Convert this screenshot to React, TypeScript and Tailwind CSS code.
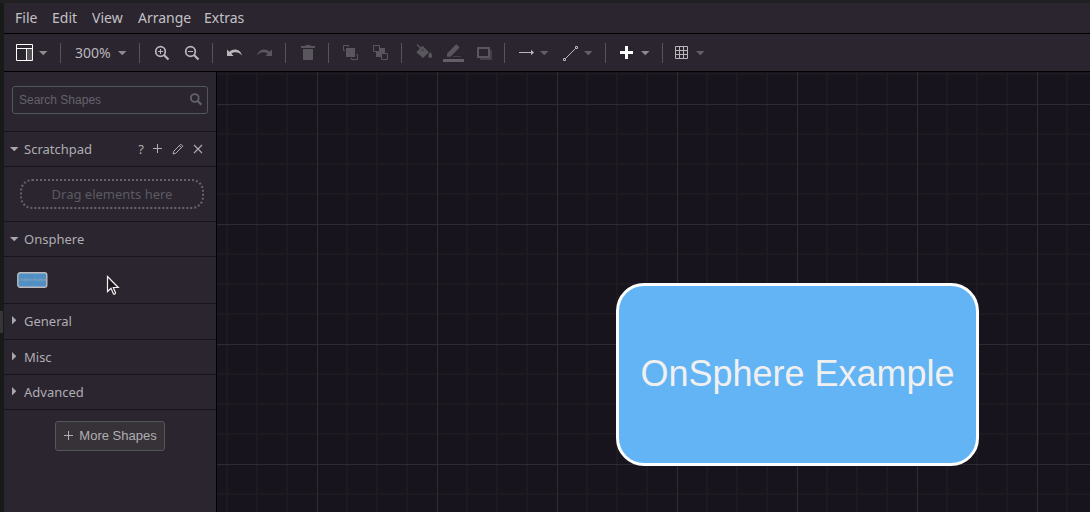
import type { ReactNode } from "react";

type IconProps = {
    children: ReactNode;
    className?: string;
    width?: number;
    height?: number;
};

const Icon = ({ children, className = "", width = 16, height = 16 }: IconProps) => (
    <svg
        aria-hidden="true"
        className={"shrink-0 " + className}
        width={width}
        height={height}
        viewBox={`0 0 ${width} ${height}`}
        fill="none"
        stroke="none"
    >
        {children}
    </svg>
);

const Caret = ({ className = "text-[#626066]" }: { className?: string }) => (
    <Icon width={9} height={6} className={className}>
        <path d="M0 1H8.5L4.25 5.3Z" fill="currentColor" />
    </Icon>
);

const LayoutIcon = () => (
    <Icon width={18} height={18}>
        <path d="M11 5H16V16H11Z" fill="#555356" />
        <path d="M0.5 0.5H16.5V16.5H0.5ZM0.5 4.5H16.5M10.5 4.5V16.5" stroke="#fff" />
    </Icon>
);

const ZoomIcon = ({ plus }: { plus?: boolean }) => (
    <Icon className="text-[#b9b7bb]">
        <circle cx="6.5" cy="6.5" r="4.8" stroke="currentColor" strokeWidth="1.7" />
        <path d="M10 10L14.5 14.5" stroke="currentColor" strokeWidth="2.2" />
        <path d={plus ? "M4 6.5H9M6.5 4V9" : "M4 6.5H9"} stroke="currentColor" />
    </Icon>
);

const UndoIcon = () => (
    <Icon className="text-[#b9b7bb]">
        <path d="M0 4.5V11H6.5L4.3 8.6C7.4 6.4 11.8 6.8 15 10.4C13.5 4.2 6.8 2.6 2.4 6.8Z" fill="currentColor" />
    </Icon>
);

const RedoIcon = () => (
    <Icon className="text-[#59565d]">
        <path d="M15 4.5V11H8.5L10.7 8.6C7.6 6.4 3.2 6.8 0 10.4C1.5 4.2 8.2 2.6 12.6 6.8Z" fill="currentColor" />
    </Icon>
);

const TrashIcon = () => (
    <Icon className="text-[#59565d]">
        <path d="M1 1H5L6 0H10L11 1H15V3H1ZM3 4H13V14C13 15 12.5 15 11.5 15H4.5C3.5 15 3 15 3 14Z" fill="currentColor" />
    </Icon>
);

const ToFrontIcon = () => (
    <Icon className="text-[#59565d]">
        <path d="M3 3H12V12H3Z" fill="currentColor" />
        <path d="M2 5.5H0.5V0.5H5.5V2M13 9.5H14.5V14.5H8.5V13" stroke="currentColor" />
    </Icon>
);

const ToBackIcon = () => (
    <Icon className="text-[#59565d]">
        <path d="M7 3H12V8H8V12H3V7H7Z" fill="currentColor" />
        <path d="M0.5 0.5H6.5V6.5H0.5ZM8.5 8.5H14.5V14.5H8.5Z" stroke="currentColor" />
    </Icon>
);

const FillIcon = () => (
    <Icon width={18} height={18} className="text-[#59565d]">
        <path d="M2 0.5L7.5 6" stroke="currentColor" strokeWidth="1.3" />
        <path d="M7.5 1.8L14 8.2L8 14L1.3 8.2ZM7.3 4.4L5.6 6.4H9.2Z" fill="currentColor" fillRule="evenodd" />
        <path d="M15.2 8C13.7 10 13.2 11 13.2 12A2 2 0 0 0 17.2 12C17.2 11 16.7 10 15.2 8Z" fill="currentColor" />
    </Icon>
);

const StrokeIcon = () => (
    <Icon width={22} height={18} className="text-[#59565d]">
        <path d="M4 9.5L12.2 1.2L13.5 0.2L16.6 3.3L15.6 4.6L7.5 12.7H4Z" fill="currentColor" />
        <path d="M10 12.5H18" stroke="#434047" />
        <path d="M0 15H21V18H0Z" fill="#626066" />
    </Icon>
);

const ShadowIcon = () => (
    <Icon className="text-[#59565d]">
        <path d="M4 5H16V15H4Z" fill="#434047" />
        <path d="M2 3H13V12H2Z" fill="#2a252f" stroke="currentColor" strokeWidth="2" />
    </Icon>
);

const ConnectionIcon = () => (
    <Icon width={18} className="text-[#b9b7bb]">
        <path d="M2 7.5H15" stroke="currentColor" />
        <path d="M14 4.8L17 7.5L14 10.2Z" fill="currentColor" />
    </Icon>
);

const WaypointsIcon = () => (
    <Icon width={18} className="text-[#b9b7bb]">
        <path d="M4.5 13.5L14.5 3.5" stroke="currentColor" />
        <path d="M2.5 13.5H4.5V15.5H2.5ZM14.5 1.5H16.5V3.5H14.5Z" fill="#2a252f" stroke="currentColor" />
    </Icon>
);

const InsertIcon = () => (
    <Icon width={18} className="text-white">
        <path d="M7 1H10V6H15V9H10V14H7V9H2V6H7Z" fill="currentColor" />
    </Icon>
);

const TableIcon = () => (
    <Icon width={18} className="text-[#b9b7bb]">
        <path d="M0.5 1.5H12.5V13.5H0.5ZM4.5 1.5V13.5M8.5 1.5V13.5M0.5 5.5H12.5M0.5 9.5H12.5" stroke="currentColor" />
    </Icon>
);

const PlusIcon = () => (
    <Icon width={12} height={12}>
        <path d="M5.5 1V10M1 5.5H10" stroke="currentColor" />
    </Icon>
);

const PencilIcon = () => (
    <Icon width={12} height={12}>
        <path d="M1 11L1.8 8.2L8.8 1.2L10.8 3.2L3.8 10.2ZM7.4 2.6L9.4 4.6" stroke="currentColor" />
    </Icon>
);

const CrossIcon = () => (
    <Icon width={12} height={12}>
        <path d="M2 2L10 10M10 2L2 10" stroke="currentColor" strokeWidth="1.1" />
    </Icon>
);

const Separator = () => <div className="ml-[5px] mr-[7px] h-5 w-px bg-[#505759]" />;

const ToolButton = ({ label, children }: { label: string; children: ReactNode }) => (
    <button aria-label={label} className="flex h-7 w-[30px] items-center justify-center">
        {children}
    </button>
);

type ToolMenuProps = {
    label: string;
    caret?: string;
    width?: string;
    children: ReactNode;
};

const ToolMenu = ({ label, caret, width = "w-11", children }: ToolMenuProps) => (
    <button aria-label={label} className={"flex h-7 items-center justify-between pl-[5px] pr-[7px] " + width}>
        {children}
        <Caret className={caret} />
    </button>
);

const menus = [
    { label: "File", width: "w-[37px]" },
    { label: "Edit", width: "w-10" },
    { label: "View", width: "w-[46px]" },
    { label: "Arrange", width: "w-[66px]" },
    { label: "Extras", width: "w-14" },
];

const MenuBar = () => (
    <nav className="flex h-[31px] items-center border-b border-black pl-[11px] text-sm text-[#c3c1c5]">
        {menus.map((menu) => (
            <button key={menu.label} className={"text-left " + menu.width}>
                {menu.label}
            </button>
        ))}
    </nav>
);

const Toolbar = () => (
    <div role="toolbar" className="flex h-[38px] items-center border-b border-black pl-[7px] pt-px">
        <ToolMenu label="Layout" caret="text-[#8d8b90]">
            <LayoutIcon />
        </ToolMenu>
        <Separator />
        <button className="flex h-7 w-[66px] items-center justify-between px-[7px] text-sm text-[#b9b7bb]">
            300%
            <Caret className="text-[#8d8b90]" />
        </button>
        <Separator />
        <ToolButton label="Zoom In"><ZoomIcon plus /></ToolButton>
        <ToolButton label="Zoom Out"><ZoomIcon /></ToolButton>
        <Separator />
        <ToolButton label="Undo"><UndoIcon /></ToolButton>
        <ToolButton label="Redo"><RedoIcon /></ToolButton>
        <Separator />
        <ToolButton label="Delete"><TrashIcon /></ToolButton>
        <Separator />
        <ToolButton label="To Front"><ToFrontIcon /></ToolButton>
        <ToolButton label="To Back"><ToBackIcon /></ToolButton>
        <Separator />
        <ToolButton label="Fill Color"><FillIcon /></ToolButton>
        <ToolButton label="Line Color"><StrokeIcon /></ToolButton>
        <ToolButton label="Shadow"><ShadowIcon /></ToolButton>
        <Separator />
        <ToolMenu label="Connection"><ConnectionIcon /></ToolMenu>
        <ToolMenu label="Waypoints"><WaypointsIcon /></ToolMenu>
        <Separator />
        <ToolMenu label="Insert" caret="text-[#8d8b90]"><InsertIcon /></ToolMenu>
        <Separator />
        <ToolMenu label="Table" width="w-[42px]"><TableIcon /></ToolMenu>
    </div>
);

type SectionTitleProps = {
    title: string;
    open?: boolean;
    height?: string;
    children?: ReactNode;
};

const SectionTitle = ({ title, open = false, height = "h-[35px]", children }: SectionTitleProps) => (
    <div className={"flex items-center border-b border-[#18141d] pl-[6px] pr-3 " + height}>
        <button aria-expanded={open} className="flex flex-1 items-center text-left">
            <span className="flex w-[14px]">
                {open ? (
                    <Caret className="text-[#a9a7ab]" />
                ) : (
                    <Icon width={10} height={10} className="text-[#a9a7ab]">
                        <path d="M2 0V8.5L6.3 4.25Z" fill="currentColor" />
                    </Icon>
                )}
            </span>
            {title}
        </button>
        {children}
    </div>
);

const Sidebar = () => (
    <aside className="w-[213px] shrink-0 border-r border-black text-[13px] leading-5 text-[#b0aeb2]">
        <div className="border-b border-[#18141d] px-2 pb-[17px] pt-[14px]">
            <label className="flex h-7 items-center rounded-[3px] border border-[#505759] pl-[6px] pr-[5px]">
                <input
                    type="text"
                    aria-label="Search Shapes"
                    placeholder="Search Shapes"
                    className="min-w-0 flex-1 bg-transparent font-['Liberation_Sans',sans-serif] text-xs outline-none placeholder:text-[#65626a]"
                />
                <Icon width={12} height={14} className="text-[#65626a]">
                    <circle cx="4.8" cy="5" r="3.9" stroke="currentColor" strokeWidth="1.8" />
                    <path d="M7.5 7.8L11.3 11.6" stroke="currentColor" strokeWidth="2.2" />
                </Icon>
            </label>
        </div>

        <SectionTitle title="Scratchpad" open>
            <div className="flex items-center gap-2">
                <button aria-label="Help">?</button>
                <button aria-label="Add"><PlusIcon /></button>
                <button aria-label="Edit Scratchpad"><PencilIcon /></button>
                <button aria-label="Close"><CrossIcon /></button>
            </div>
        </SectionTitle>
        <div className="border-b border-[#18141d] py-3 pl-4 pr-3">
            <div className="flex h-[30px] items-center justify-center rounded-xl border-2 border-dotted border-[#65626a] text-[#5d5a62]">
                Drag elements here
            </div>
        </div>

        <SectionTitle title="Onsphere" open />
        <div className="flex h-[47px] items-center border-b border-[#18141d] pl-[13px]">
            <button aria-label="OnSphere Example">
                <Icon width={31} height={16}>
                    <rect x="0.8" y="0.8" width="29" height="14.4" rx="2.2" fill="#5190c4" stroke="#bcbabd" strokeWidth="1.4" />
                    <text x="15.5" y="8.5" textAnchor="middle" fontSize="3" fill="#a5a9b0" fontFamily="Liberation Sans, sans-serif">
                        OnSphere Example
                    </text>
                </Icon>
            </button>
        </div>

        <SectionTitle title="General" height="h-9 pb-px" />
        <SectionTitle title="Misc" />
        <SectionTitle title="Advanced" />

        <div className="flex justify-center pt-[11px]">
            <button className="flex h-[30px] w-[110px] items-center justify-center gap-1 rounded-[3px] border border-[#505759] bg-[#363237] font-['Liberation_Sans',sans-serif]">
                <PlusIcon />
                More Shapes
            </button>
        </div>
    </aside>
);

// Ten-unit canvas grid at 300%, with every fourth line emphasised
const Grid = () => (
    <svg aria-hidden="true" className="absolute inset-0 size-full">
        <defs>
            <pattern id="grid" x="100" y="32" width="120" height="120" patternUnits="userSpaceOnUse">
                <path d="M30 0V120M60 0V120M90 0V120M0 30H120M0 60H120M0 90H120" stroke="#1d1a20" strokeWidth="2" />
                <path d="M0.5 0V120M0 0.5H120" stroke="#2e2b31" />
            </pattern>
        </defs>
        <rect width="100%" height="100%" fill="url(#grid)" />
    </svg>
);

const Canvas = () => (
    <main className="relative flex-1 overflow-hidden bg-[#18141d]">
        <Grid />
        <div className="absolute left-[399px] top-[211px] flex h-[183px] w-[363px] items-center justify-center rounded-[28px] border-3 border-white bg-[#62b4f4] pb-0.5 font-['Liberation_Sans',sans-serif] text-4xl text-[#f0f0f0]">
            OnSphere Example
        </div>
    </main>
);

const Pointer = () => (
    <svg aria-hidden="true" className="absolute left-[106px] top-[272px]" width="14" height="21" viewBox="0 0 14 21">
        <path
            d="M1.5 1.5V16.5L5 13.2L7.4 18.8C8 19.6 9.8 18.8 9.5 17.8L7.3 12.5H12.3Z"
            fill="#1c1a1e"
            stroke="#f2f2f2"
            strokeWidth="1.2"
        />
    </svg>
);

const App = () => (
    <div className="relative flex min-h-screen border-t-3 border-[#202020] bg-[#2a252f] font-['Noto_Sans',sans-serif]">
        <div className="flex w-1 shrink-0 flex-col bg-[#181a18] pt-[308px]">
            <div className="h-[22px] w-[3px] bg-[#35353a]" />
        </div>
        <div className="flex min-w-0 flex-1 flex-col">
            <MenuBar />
            <Toolbar />
            <div className="flex flex-1">
                <Sidebar />
                <Canvas />
            </div>
        </div>
        <Pointer />
    </div>
);

export default App;
